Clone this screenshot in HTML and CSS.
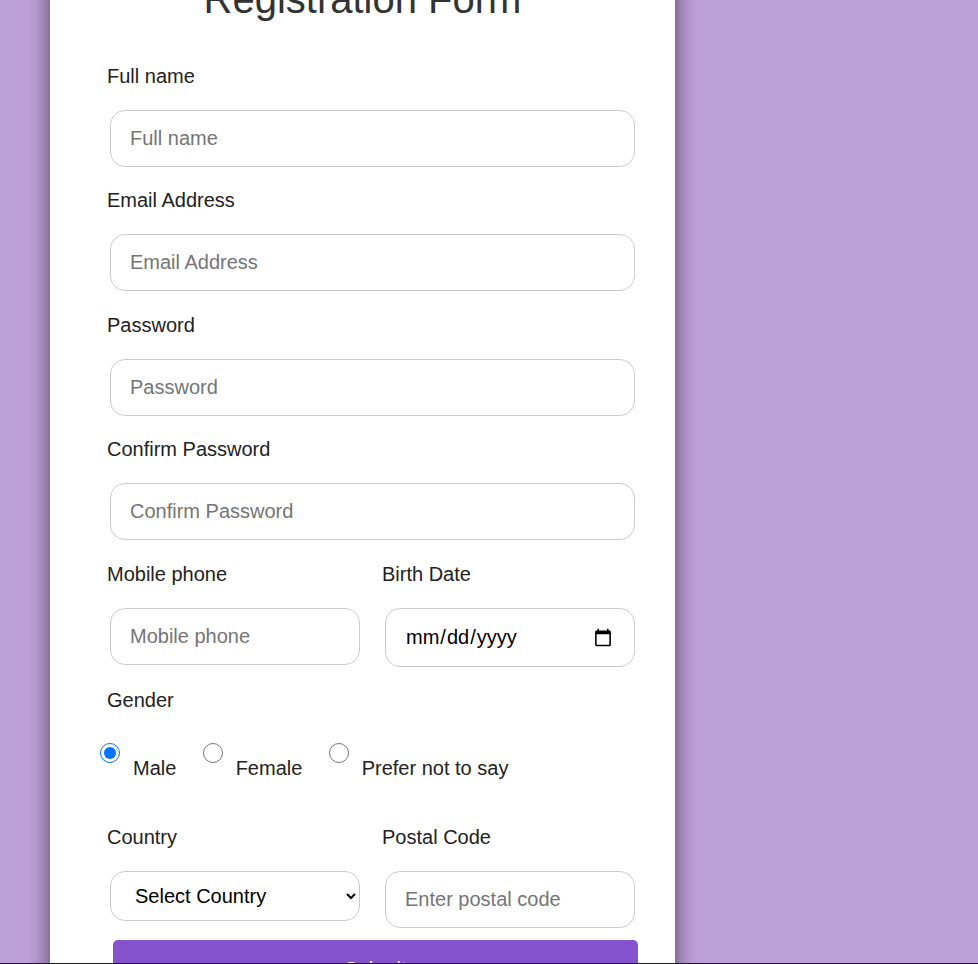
FILE: index.html
```html
<!DOCTYPE html>
<html lang="en">
<head>
<meta charset="utf-8">
<title>Registration Form</title>
<link rel="stylesheet" href="styles.css">
</head>
<body>
<div class="card">
  <h1 class="title">Registration Form</h1>
  <form class="form">
    <label class="label" for="fullname">Full name</label>
    <input class="field" id="fullname" type="text" placeholder="Full name">

    <label class="label" for="email">Email Address</label>
    <input class="field field-wide-gap" id="email" type="email" placeholder="Email Address">

    <label class="label" for="password">Password</label>
    <input class="field" id="password" type="password" placeholder="Password">

    <label class="label" for="confirm">Confirm Password</label>
    <input class="field field-wide-gap" id="confirm" type="password" placeholder="Confirm Password">

    <div class="row">
      <div class="col">
        <label class="label" for="mobile">Mobile phone</label>
        <input class="field" id="mobile" type="tel" placeholder="Mobile phone">
      </div>
      <div class="col">
        <label class="label" for="birth">Birth Date</label>
        <input class="field" id="birth" type="date">
      </div>
    </div>

    <div class="label">Gender</div>
    <div class="radios">
      <label class="radio-item"><input class="radio" type="radio" name="gender" checked><span class="radio-text">Male</span></label>
      <label class="radio-item"><input class="radio" type="radio" name="gender"><span class="radio-text">Female</span></label>
      <label class="radio-item"><input class="radio" type="radio" name="gender"><span class="radio-text">Prefer not to say</span></label>
    </div>

    <div class="row row-last">
      <div class="col">
        <label class="label" for="country">Country</label>
        <select class="field select" id="country">
          <option>Select Country</option>
          <option>United States</option>
          <option>Canada</option>
          <option>United Kingdom</option>
        </select>
      </div>
      <div class="col">
        <label class="label" for="postal">Postal Code</label>
        <input class="field" id="postal" type="text" placeholder="Enter postal code">
      </div>
    </div>

    <button class="submit" type="submit">Submit</button>
  </form>
</div>
<div class="edge"></div>
</body>
</html>
```
FILE: styles.css
```css
html, body {
  margin: 0;
  height: 100%;
}
body {
  background: #bfa1d9;
  font-family: "Liberation Sans", Arial, sans-serif;
  overflow: hidden;
}
.card {
  width: 525px;
  margin: -24px 0 0 50px;
  padding: 0 50px 40px;
  background: #fff;
  box-shadow: 0 0 22px rgba(0, 0, 0, 0.6);
}
.title {
  margin: 0;
  font-size: 40px;
  font-weight: 400;
  line-height: 46px;
  text-align: center;
  color: #333;
}
.form {
  margin: 43px -13px 0 7px;
  display: flex;
  flex-direction: column;
}
.label {
  display: block;
  font-size: 20px;
  line-height: 23px;
  color: #222;
  margin-bottom: 22px;
}
.field {
  box-sizing: border-box;
  width: calc(100% - 6px);
  margin: 0 3px 22px;
  padding: 16px 19px;
  font-family: inherit;
  font-size: 20px;
  color: #000;
  border: 1px solid #ccc;
  border-radius: 15px;
  background: #fff;
  outline: none;
}
.field-wide-gap {
  margin-bottom: 23px;
}
.field::placeholder {
  color: #757575;
}
.select {
  height: 50px;
  padding: 0 10px 0 20px;
  margin-bottom: 0;
}
.row {
  display: grid;
  grid-template-columns: 256px 256px;
  column-gap: 19px;
  align-items: start;
}
.col {
  display: flex;
  flex-direction: column;
}
#birth {
  margin-bottom: 0;
}
.row:first-of-type .col .field {
  margin-bottom: 0;
}
.row + .label {
  margin-top: 22px;
}
.radios {
  display: flex;
  margin: 9px 0 0 -7px;
  gap: 26.3px;
}
.radio-item {
  display: flex;
  align-items: flex-start;
  gap: 13px;
  font-size: 20px;
  color: #222;
}
.radio {
  width: 20px;
  height: 20px;
  margin: 0;
}
.radio-text {
  line-height: 23px;
  margin-top: 14px;
}
.row-last {
  margin-top: 46px;
}
.row-last .field {
  margin-bottom: 0;
}
.submit {
  width: 525px;
  margin: 12px 0 0 6px;
  padding: 18px 0;
  font-family: inherit;
  font-size: 20px;
  line-height: 23px;
  color: #fff;
  background: #8553cb;
  border: none;
  border-radius: 5px;
}
.edge {
  position: fixed;
  left: 0;
  right: 0;
  bottom: 0;
  height: 1px;
  background: #1a1a1a;
}
```
